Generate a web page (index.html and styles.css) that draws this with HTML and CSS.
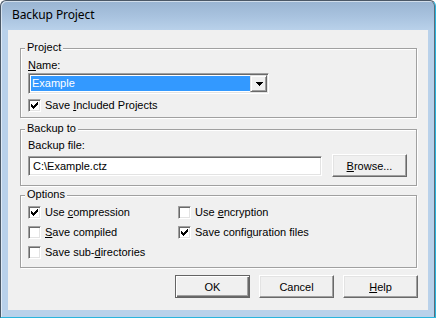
FILE: index.html
```html
<!DOCTYPE html>
<html>
<head>
<meta charset="utf-8">
<title>Backup Project</title>
<link rel="stylesheet" href="styles.css">
</head>
<body>
<div class="window">
  <div class="titlebar"><span class="title">Backup Project</span></div>
  <div class="frame">
    <div class="client">
      <div class="group group-project">
        <span class="legend">Project</span>
        <div class="label"><u>N</u>ame:</div>
        <div class="combo">
          <div class="combo-field"><span class="combo-value">Example</span></div>
          <div class="combo-btn">
            <svg width="7" height="4" viewBox="0 0 7 4" shape-rendering="crispEdges"><path d="M0 0h7v1h-7z M1 1h5v1h-5z M2 2h3v1h-3z M3 3h1v1h-1z" fill="#000"/></svg>
          </div>
        </div>
        <div class="check check-project">
          <span class="box"><svg width="11" height="11" viewBox="0 0 11 11" shape-rendering="crispEdges"><path d="M8 2h1v1h-1z M7 3h2v1h-2z M2 4h1v1h-1z M6 4h3v1h-3z M2 5h2v1h-2z M5 5h3v1h-3z M2 6h5v1h-5z M3 7h3v1h-3z M4 8h1v1h-1z" fill="#000"/></svg></span>
          <span>Save <u>I</u>ncluded Projects</span>
        </div>
      </div>

      <div class="group group-backup">
        <span class="legend">Backup to</span>
        <div class="label">Backup file:</div>
        <div class="file-row">
          <div class="textfield">C:\Example.ctz</div>
          <div class="button"><span><u>B</u>rowse...</span></div>
        </div>
      </div>

      <div class="group group-options">
        <span class="legend">Options</span>
        <div class="options-grid">
          <div class="check">
            <span class="box"><svg width="11" height="11" viewBox="0 0 11 11" shape-rendering="crispEdges"><path d="M8 2h1v1h-1z M7 3h2v1h-2z M2 4h1v1h-1z M6 4h3v1h-3z M2 5h2v1h-2z M5 5h3v1h-3z M2 6h5v1h-5z M3 7h3v1h-3z M4 8h1v1h-1z" fill="#000"/></svg></span>
            <span>Use <u>c</u>ompression</span>
          </div>
          <div class="check">
            <span class="box"></span>
            <span>Use <u>e</u>ncryption</span>
          </div>
          <div class="check">
            <span class="box"></span>
            <span><u>S</u>ave compiled</span>
          </div>
          <div class="check">
            <span class="box"><svg width="11" height="11" viewBox="0 0 11 11" shape-rendering="crispEdges"><path d="M8 2h1v1h-1z M7 3h2v1h-2z M2 4h1v1h-1z M6 4h3v1h-3z M2 5h2v1h-2z M5 5h3v1h-3z M2 6h5v1h-5z M3 7h3v1h-3z M4 8h1v1h-1z" fill="#000"/></svg></span>
            <span>Save confi<u>g</u>uration files</span>
          </div>
          <div class="check">
            <span class="box"></span>
            <span>Save sub-<u>d</u>irectories</span>
          </div>
        </div>
      </div>

      <div class="buttons">
        <div class="button button-default"><span>OK</span></div>
        <div class="button"><span>Cancel</span></div>
        <div class="button"><span><u>H</u>elp</span></div>
      </div>
    </div>
  </div>
</div>
</body>
</html>
```

FILE: styles.css
```css
html, body {
  margin: 0;
  padding: 0;
  background: #ffffff;
}

body {
  font-family: "Liberation Sans", Arial, sans-serif;
  font-size: 11px;
  color: #000;
}

u {
  text-decoration: underline;
  text-underline-offset: 1px;
}

.window {
  width: 436px;
  height: 318px;
  box-sizing: border-box;
  display: flex;
  flex-direction: column;
  border: 1px solid #4b5866;
  border-right-color: #2ab4dc;
  border-bottom-color: #2ab4dc;
  border-radius: 6px 6px 0 0;
  background: linear-gradient(#99b4d1 0px, #a9c3df 16px, #b9d1ea 29px, #b9d1ea 100%);
  overflow: hidden;
  box-shadow: inset 1px 1px 0 rgba(255, 255, 255, 0.55), inset -1px 0 0 #5d6b79;
}

.titlebar {
  height: 29px;
  flex: none;
  display: flex;
  align-items: center;
  padding-left: 11px;
}

.title {
  font-family: "Noto Sans", "Open Sans", sans-serif;
  font-size: 12px;
  color: #000;
  margin-top: -2px;
  letter-spacing: -0.1px;
}

.frame {
  flex: 1;
  display: flex;
  padding: 0 7px 7px 7px;
}

.client {
  flex: 1;
  background: #f0f0f0;
  display: flex;
  flex-direction: column;
  padding: 18px 11px 0 12px;
}

.group {
  position: relative;
  box-sizing: border-box;
  border: 1px solid #a0a0a0;
  box-shadow: inset 1px 1px 0 #ffffff, 1px 1px 0 #ffffff;
  padding-left: 7px;
  flex: none;
}

.legend {
  position: absolute;
  top: -8px;
  left: 4px;
  padding: 0 2px;
  line-height: 13px;
  background: #f0f0f0;
}

.label {
  line-height: 13px;
}

.group-project {
  height: 70px;
  padding-top: 10px;
}

.group-backup {
  height: 57px;
  margin-top: 11px;
  padding-top: 9px;
}

.group-options {
  height: 73px;
  margin-top: 9px;
  padding-top: 10px;
}

/* combo box */
.combo {
  margin-top: 1px;
  width: 241px;
  height: 21px;
  box-sizing: border-box;
  display: flex;
  border: 1px solid;
  border-color: #a0a0a0 #ffffff #ffffff #a0a0a0;
  box-shadow: inset 1px 1px 0 #696969, inset -1px -1px 0 #e3e3e3;
  background: #ffffff;
  padding: 1px;
}

.combo-field {
  flex: 1;
  padding: 1px 0 1px 1px;
  display: flex;
}

.combo-value {
  flex: 1;
  background: #3399ff;
  color: #ffffff;
  line-height: 15px;
  padding-left: 1px;
}

.combo-btn {
  width: 17px;
  flex: none;
  box-sizing: border-box;
  background: #f0f0f0;
  border: 1px solid;
  border-color: #e3e3e3 #696969 #696969 #e3e3e3;
  box-shadow: inset 1px 1px 0 #ffffff, inset -1px -1px 0 #a0a0a0;
  display: flex;
  align-items: center;
  justify-content: center;
}

.combo-btn svg {
  display: block;
  margin-left: 1px;
}

/* checkboxes */
.check {
  display: flex;
  align-items: center;
  gap: 4px;
  height: 13px;
  line-height: 13px;
}

.check-project {
  margin-top: 5px;
}

.box {
  width: 13px;
  height: 13px;
  box-sizing: border-box;
  flex: none;
  border: 1px solid;
  border-color: #a0a0a0 #ffffff #ffffff #a0a0a0;
  box-shadow: inset 1px 1px 0 #696969, inset -1px -1px 0 #e3e3e3;
  background: #ffffff;
}

.box svg {
  display: block;
}

.options-grid {
  display: grid;
  grid-template-columns: 150px 150px;
  grid-auto-rows: 13px;
  row-gap: 7px;
}

/* backup row */
.file-row {
  margin-top: 2px;
  display: flex;
  align-items: center;
  gap: 10px;
  height: 23px;
}

.textfield {
  width: 294px;
  height: 20px;
  box-sizing: border-box;
  border: 1px solid;
  border-color: #a0a0a0 #ffffff #ffffff #a0a0a0;
  box-shadow: inset 1px 1px 0 #696969, inset -1px -1px 0 #e3e3e3;
  background: #ffffff;
  padding-left: 4px;
  line-height: 18px;
}

/* buttons */
.button {
  width: 75px;
  height: 23px;
  box-sizing: border-box;
  flex: none;
  display: flex;
  align-items: center;
  justify-content: center;
  background: #f0f0f0;
  border: 1px solid;
  border-color: #ffffff #696969 #696969 #ffffff;
  box-shadow: inset -1px -1px 0 #a0a0a0, inset 1px 1px 0 #e3e3e3;
}

.button-default {
  border-color: #646464;
  box-shadow: inset 1px 1px 0 #ffffff, inset -1px -1px 0 #696969, inset -2px -2px 0 #a0a0a0;
}

.buttons {
  margin-top: 7px;
  margin-right: -1px;
  display: flex;
  justify-content: flex-end;
  gap: 9px;
}
```
